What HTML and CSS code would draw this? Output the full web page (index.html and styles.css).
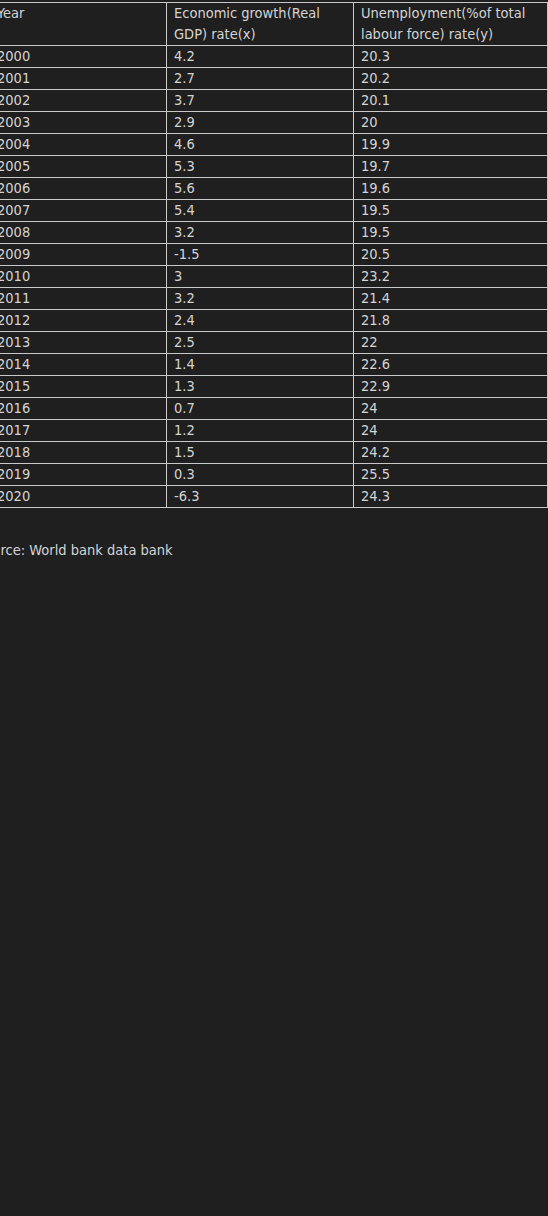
FILE: index.html
```html
<!DOCTYPE html>
<html>
<head>
<meta charset="utf-8">
<link rel="stylesheet" href="styles.css">
</head>
<body>
<table class="data">
<colgroup><col class="c1"><col class="c2"><col class="c3"></colgroup>
<tr><td>Year</td><td>Economic growth(Real GDP) rate(x)</td><td>Unemployment(%of total labour force) rate(y)</td></tr>
<tr><td>2000</td><td>4.2</td><td>20.3</td></tr>
<tr><td>2001</td><td>2.7</td><td>20.2</td></tr>
<tr><td>2002</td><td>3.7</td><td>20.1</td></tr>
<tr><td>2003</td><td>2.9</td><td>20</td></tr>
<tr><td>2004</td><td>4.6</td><td>19.9</td></tr>
<tr><td>2005</td><td>5.3</td><td>19.7</td></tr>
<tr><td>2006</td><td>5.6</td><td>19.6</td></tr>
<tr><td>2007</td><td>5.4</td><td>19.5</td></tr>
<tr><td>2008</td><td>3.2</td><td>19.5</td></tr>
<tr><td>2009</td><td>-1.5</td><td>20.5</td></tr>
<tr><td>2010</td><td>3</td><td>23.2</td></tr>
<tr><td>2011</td><td>3.2</td><td>21.4</td></tr>
<tr><td>2012</td><td>2.4</td><td>21.8</td></tr>
<tr><td>2013</td><td>2.5</td><td>22</td></tr>
<tr><td>2014</td><td>1.4</td><td>22.6</td></tr>
<tr><td>2015</td><td>1.3</td><td>22.9</td></tr>
<tr><td>2016</td><td>0.7</td><td>24</td></tr>
<tr><td>2017</td><td>1.2</td><td>24</td></tr>
<tr><td>2018</td><td>1.5</td><td>24.2</td></tr>
<tr><td>2019</td><td>0.3</td><td>25.5</td></tr>
<tr><td>2020</td><td>-6.3</td><td>24.3</td></tr>
</table>
<p class="source">Source: World bank data bank</p>
</body>
</html>
```
FILE: styles.css
```css
html, body {
  background: #1f1f1f;
}
body {
  margin: 0;
  padding: 2px 0 0 0;
  color: #d4d4d4;
  font-family: "DejaVu Sans Condensed", "DejaVu Sans", sans-serif;
  font-size: 14.5px;
  line-height: 21px;
}
.data {
  border-collapse: collapse;
  table-layout: fixed;
  margin-left: -11px;
  width: 559px;
}
.c1 { width: 177px; }
.c2 { width: 187px; }
.c3 { width: 194px; }
.data td {
  border: 1px solid #c8c8c8;
  padding: 0 7px;
  vertical-align: top;
  text-align: left;
}
.source {
  margin: 32px 0 0 -24px;
}
```
